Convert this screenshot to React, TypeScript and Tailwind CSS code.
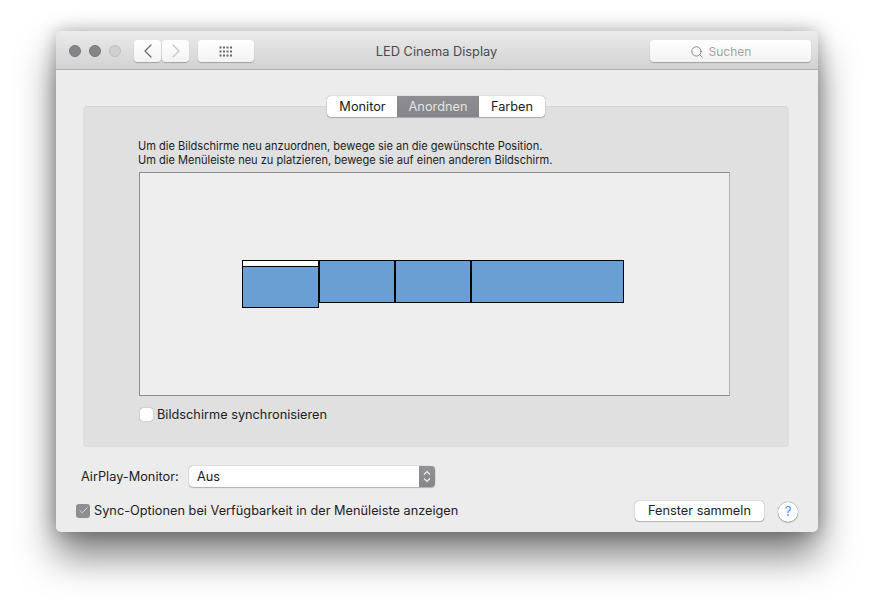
import React from 'react';
import { ChevronLeft, ChevronRight, Search, Check } from 'lucide-react';

const font = { fontFamily: 'Inter, "Liberation Sans", sans-serif' };

const GridIcon = () => (
  <svg width="15" height="11" viewBox="0 0 15 11" fill="#666">
    {[0, 4, 8].map((y) =>
      [0, 3.5, 7, 10.5].map((x) => <rect key={`${x}-${y}`} x={x + 0.5} y={y + 0.5} width="2" height="2" />)
    )}
  </svg>
);

export default function App() {
  return (
    <div className="w-[874px] h-[612px] bg-white overflow-hidden pl-[56px] pt-[31px]" style={font}>
      <div className="w-[762px] h-[501px] flex flex-col rounded-[5px] bg-[#ececec] shadow-[0_24px_38px_rgba(0,0,0,0.5),0_0_18px_rgba(0,0,0,0.3)]">
        {/* Title bar */}
        <div className="relative h-[39px] shrink-0 flex items-center pt-[2px] pl-[13px] pr-[7px] rounded-t-[5px] border-b border-[#b1b1b1] bg-gradient-to-b from-[#ebebeb] to-[#d2d2d2]">
          <div className="flex gap-2">
            <span className="w-3 h-3 rounded-full bg-[#87858a] border border-[#77757a]" />
            <span className="w-3 h-3 rounded-full bg-[#87858a] border border-[#77757a]" />
            <span className="w-3 h-3 rounded-full bg-[#d0d0d0] border border-[#bebebe]" />
          </div>
          <div className="ml-[13px] flex gap-px">
            <button className="w-[27px] h-[22px] flex items-center justify-center rounded-[4px] bg-gradient-to-b from-white to-[#f3f3f3] shadow-[0_1px_1px_rgba(0,0,0,0.25)]">
              <ChevronLeft size={24} strokeWidth={1.2} className="text-[#666]" />
            </button>
            <button className="w-[27px] h-[22px] flex items-center justify-center rounded-[4px] bg-gradient-to-b from-white to-[#f3f3f3] shadow-[0_1px_1px_rgba(0,0,0,0.25)]">
              <ChevronRight size={24} strokeWidth={1.2} className="text-[#c4c4c4]" />
            </button>
          </div>
          <button className="ml-[9px] w-[56px] h-[22px] flex items-center justify-center rounded-[4px] bg-gradient-to-b from-white to-[#f3f3f3] shadow-[0_1px_1px_rgba(0,0,0,0.25)]">
            <GridIcon />
          </button>
          <div className="flex-1 text-center text-[12.8px] text-[#4a4a4a] pr-[31px] pt-[2px]">LED Cinema Display</div>
          <div className="w-[161px] h-[22px] flex items-center justify-center gap-[5px] pr-[20px] pt-[1px] rounded-[4px] bg-gradient-to-b from-white to-[#f3f3f3] shadow-[0_1px_1px_rgba(0,0,0,0.25)]">
            <Search size={14} strokeWidth={1.3} className="text-[#666]" />
            <span className="text-[12px] text-[#a3a3a3]">Suchen</span>
          </div>
        </div>

        {/* Body */}
        <div className="flex-1 flex flex-col pt-[26px]">
          <div className="relative z-10 self-start ml-[271px] flex h-[21px] rounded-[4px] overflow-hidden bg-white text-[12.75px] text-[#1a1a1a] shadow-[0_0_1px_rgba(0,0,0,0.55),0_1px_1px_rgba(0,0,0,0.2)]">
            <span className="w-[70px] pl-px flex items-center justify-center">Monitor</span>
            <span className="w-[82px] flex items-center justify-center text-[#e4e4e4] bg-gradient-to-b from-[#8f8e92] to-[#858488]">Anordnen</span>
            <span className="w-[66px] flex items-center justify-center">Farben</span>
          </div>

          <div className="-mt-[11px] ml-[27px] w-[706px] h-[341px] shrink-0 rounded-[4px] bg-[#e0e0e0] border border-[#dedede] border-t-[#d6d6d6] pl-[55px] pt-[32px]">
            <p className="-ml-px text-[11.05px] leading-[14px] text-[#1c1c1c]">Um die Bildschirme neu anzuordnen, bewege sie an die gewünschte Position.</p>
            <p className="-ml-px text-[11.05px] leading-[14px] text-[#1c1c1c]">Um die Menüleiste neu zu platzieren, bewege sie auf einen anderen Bildschirm.</p>
            <div className="relative mt-[5px] w-[591px] h-[224px] bg-[#eeeeee] border border-[#8c8c8c] border-r-[#b0b0b0]">
              {/* display arrangement */}
              <div className="absolute left-[102px] top-[87px] w-[77px] h-[48px] border border-black bg-[#6a9fd4]">
                <div className="h-[5px] bg-white" />
                <div className="h-px bg-black" />
              </div>
              <div className="absolute left-[179px] top-[87px] w-[76px] h-[43px] border border-black bg-[#6a9fd4]" />
              <div className="absolute left-[255px] top-[87px] w-[76px] h-[43px] border border-black bg-[#6a9fd4]" />
              <div className="absolute left-[331px] top-[87px] w-[153px] h-[43px] border border-black bg-[#6a9fd4]" />
            </div>
            <label className="mt-[9px] flex items-center gap-[4px] text-[12.75px] text-[#222]">
              <span className="ml-px w-[13px] h-[13px] rounded-[3px] bg-white shadow-[0_0_1px_rgba(0,0,0,0.6)]" />
              <span>Bildschirme synchronisieren</span>
            </label>
          </div>

          <div className="mt-[19px] ml-[25px] flex items-center h-[21px]">
            <span className="w-[108px] text-[12.75px] text-[#222]">AirPlay-Monitor:</span>
            <div className="w-[246px] h-[21px] flex rounded-[4px] overflow-hidden bg-white shadow-[0_0_1px_rgba(0,0,0,0.6),0_1px_1px_rgba(0,0,0,0.2)]">
              <span className="flex-1 pl-[8px] text-[12.75px] text-[#1a1a1a] leading-[21px]">Aus</span>
              <span className="w-[16px] flex items-center justify-center bg-gradient-to-b from-[#939296] to-[#858488]">
                <svg width="8" height="13" viewBox="0 0 8 13" fill="none" stroke="#f0f0f0" strokeWidth="1.2">
                  <path d="M1 4.5 L4 1.5 L7 4.5" />
                  <path d="M1 8.5 L4 11.5 L7 8.5" />
                </svg>
              </span>
            </div>
          </div>

          <div className="mt-[13px] ml-[20px] flex items-center h-[21px]">
            <span className="w-[14px] h-[14px] flex items-center justify-center rounded-[3px] bg-[#8e8d91]">
              <Check size={11} strokeWidth={1.6} className="text-[#eeeeee]" />
            </span>
            <span className="ml-[4px] text-[12.75px] text-[#222]">Sync-Optionen bei Verfügbarkeit in der Menüleiste anzeigen</span>
            <button className="ml-auto w-[129px] h-[20px] rounded-[4px] bg-white text-[12.75px] text-[#222] shadow-[0_0_1px_rgba(0,0,0,0.6),0_1px_1px_rgba(0,0,0,0.2)]">Fenster sammeln</button>
            <span className="ml-[14px] mr-[20px] mt-[2px] w-[20px] h-[20px] flex items-center justify-center rounded-full bg-white text-[13px] text-[#3a8ef0] shadow-[0_0_1px_rgba(0,0,0,0.7),0_1px_1px_rgba(0,0,0,0.2)]">?</span>
          </div>
        </div>
      </div>
    </div>
  );
}
